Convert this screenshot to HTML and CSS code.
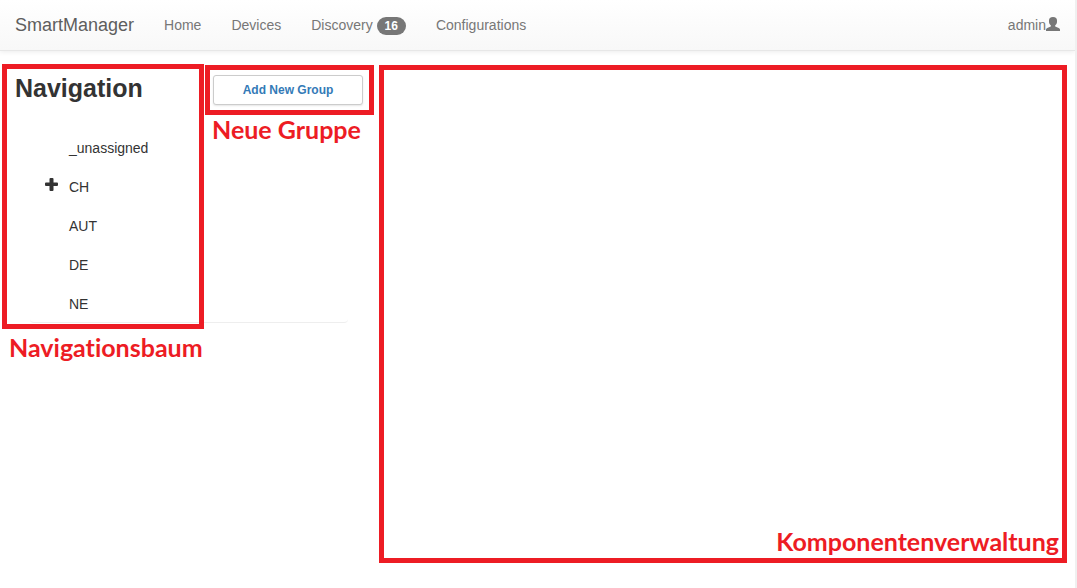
FILE: index.html
```html
<!DOCTYPE html>
<html lang="de">
<head>
<meta charset="utf-8">
<title>SmartManager</title>
<meta name="viewport" content="width=device-width, initial-scale=1">
<link rel="stylesheet" href="styles.css">
</head>
<body>
<header class="navbar">
  <a class="brand" href="#">SmartManager</a>
  <nav class="menu">
    <a href="#">Home</a>
    <a href="#">Devices</a>
    <a href="#">Discovery <span class="badge">16</span></a>
    <a href="#">Configurations</a>
  </nav>
  <a class="user" href="#">admin<svg class="user-icon" viewBox="0 0 14 14" aria-hidden="true"><path d="M7 0C4.200 0 3 1.300 3 3.400V5C3 6.500 4 7.500 4.800 8.300V9.500L1.300 10.900Q0 11.500 0 12.600V14H14V12.600Q14 11.500 12.700 10.900L9.200 9.500V8.300C10 7.500 11 6.500 11 5V3.400C11 1.300 9.800 0 7 0Z"/></svg></a>
</header>
<main class="layout">
  <aside class="column">
    <section class="frame tree">
      <h1 class="title">Navigation</h1>
      <ul class="nodes">
        <li class="node">_unassigned</li>
        <li class="node"><button class="toggle" type="button" aria-label="CH"><svg viewBox="0 0 13 13" aria-hidden="true"><path d="M5.500 0H7.500Q8.500 0 8.500 1V4.500H12Q13 4.500 13 5.500V7Q13 8 12 8H8.500V12Q8.500 13 7.500 13H5.500Q4.500 13 4.500 12V8H1Q0 8 0 7V5.500Q0 4.500 1 4.500H4.500V1Q4.500 0 5.500 0Z"/></svg></button>CH</li>
        <li class="node">AUT</li>
        <li class="node">DE</li>
        <li class="node">NE</li>
      </ul>
    </section>
    <p class="note note-tree">Navigationsbaum</p>
  </aside>
  <section class="column">
    <div class="frame actions">
      <button class="add" type="button">Add New Group</button>
    </div>
    <p class="note note-group">Neue Gruppe</p>
  </section>
  <section class="frame content">
    <p class="note">Komponentenverwaltung</p>
  </section>
</main>
</body>
</html>
```
FILE: styles.css
```css
* {
  box-sizing: border-box;
}

body {
  margin: 0;
  min-height: 100vh;
  display: flex;
  flex-direction: column;
  border-right: 2px solid #f0f0f0;
  background: #fff;
  color: #333;
  font: 14px/20px "Liberation Sans", Arial, sans-serif;
}

a {
  color: #777;
  text-decoration: none;
}

.navbar {
  display: flex;
  align-items: center;
  height: 51px;
  padding: 0 15px;
  border-bottom: 1px solid #e7e7e7;
  background: linear-gradient(#fff, #f8f8f8);
  box-shadow: 0 1px 5px rgba(0, 0, 0, 0.08);
}

.brand {
  margin-right: 30px;
  color: #5e5e5e;
  font-size: 18px;
}

.menu {
  display: flex;
  gap: 30px;
}

.badge {
  display: inline-block;
  padding: 3px 8px;
  border-radius: 10px;
  background: #777;
  color: #fff;
  font-size: 12px;
  font-weight: bold;
  line-height: 12px;
}

.user {
  display: flex;
  align-items: center;
  margin-left: auto;
}

.user-icon {
  width: 14px;
  height: 14px;
  margin-bottom: 2px;
  fill: #777;
}

.layout {
  flex: 1;
  display: grid;
  grid-template-columns: 202px 169px 1fr;
  column-gap: 1px;
  padding: 13px 8px 25px 2px;
}

.frame {
  border: 5px solid #ed1c24;
}

.tree {
  position: relative;
  padding: 0 8px 1px;
}

.tree::after {
  content: "";
  position: absolute;
  z-index: -1;
  left: 23px;
  bottom: 1px;
  width: 318px;
  height: 4px;
  border-bottom: 1px solid #eee;
  border-radius: 0 0 4px 4px;
}

.title {
  margin: 4px 0 25px;
  font-size: 25px;
  line-height: 30px;
}

.nodes {
  margin: 0;
  padding: 0;
  list-style: none;
}

.node {
  position: relative;
  height: 39px;
  padding-left: 54px;
  line-height: 40px;
}

.toggle {
  position: absolute;
  left: 30px;
  top: 11px;
  width: 13px;
  height: 13px;
  padding: 0;
  border: 0;
  background: none;
}

.toggle svg {
  display: block;
  fill: #333;
}

.note {
  margin: 0;
  color: #ed1c24;
  font: bold 25px/28px Lato, Calibri, sans-serif;
  font-variant-ligatures: none;
}

.note-tree {
  padding: 4px 0 0 7px;
}

.column {
  min-width: 0;
  white-space: nowrap;
}

.actions {
  margin-top: 1px;
  padding: 5px 6px 5px 3px;
}

.add {
  display: block;
  width: 100%;
  height: 30px;
  border: 1px solid #ccc;
  border-radius: 3px;
  background: #fff;
  box-shadow: 0 1px 2px rgba(0, 0, 0, 0.1);
  color: #337ab7;
  font: bold 12px/18px "Liberation Sans", Arial, sans-serif;
}

.note-group {
  padding-left: 7px;
}

.content {
  display: flex;
  align-items: flex-end;
  justify-content: flex-end;
  margin: 1px 0 0 4px;
  padding: 3px;
}
```
